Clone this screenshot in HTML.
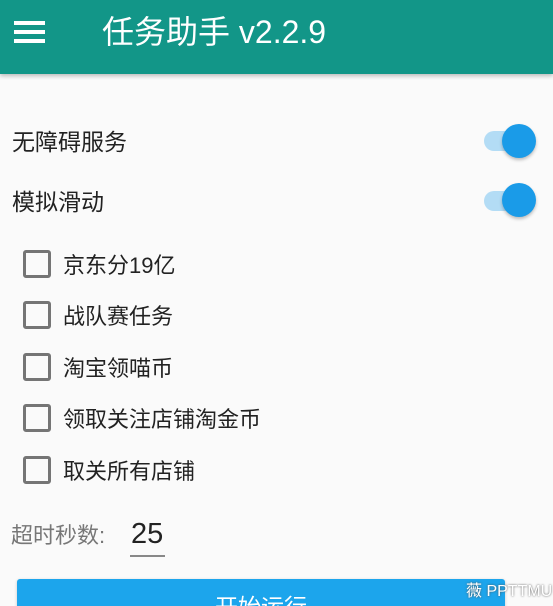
<!DOCTYPE html>
<html><head><meta charset="utf-8"><style>
html,body{margin:0;width:553px;height:606px;overflow:hidden}
body{background:#fafafa;font-family:"Liberation Sans","Noto Sans CJK SC",sans-serif;position:relative}
.hdr{position:absolute;left:0;top:0;width:553px;height:74px;background:#129688;box-shadow:0 2px 4px rgba(0,0,0,.25)}
.hb{position:absolute;left:14px;width:31px;height:4px;background:#fff}
.t{position:absolute;left:102px;top:13px;font-size:32px;color:#fff;line-height:38px;white-space:nowrap}
.lbl{position:absolute;left:12px;font-size:23px;color:#222;line-height:30px}
.trk{position:absolute;left:484px;width:30px;height:20px;border-radius:10px;background:#b3dcf5}
.th{position:absolute;left:502px;width:34px;height:34px;border-radius:50%;background:#1a9be8;box-shadow:0 2px 3px rgba(0,0,0,.25)}
.cb{position:absolute;left:23px;width:22px;height:22px;border:3px solid #757575;border-radius:3px}
.ct{position:absolute;left:63px;font-size:22px;color:#222;line-height:28px;white-space:nowrap}
</style></head><body>
<div class="hdr">
<div class="hb" style="top:21px"></div><div class="hb" style="top:30px"></div><div class="hb" style="top:39px"></div>
<div class="t">任务助手 v2.2.9</div>
</div>
<div class="lbl" style="top:127px">无障碍服务</div>
<div class="trk" style="top:131px"></div><div class="th" style="top:124px"></div>
<div class="lbl" style="top:187px">模拟滑动</div>
<div class="trk" style="top:191px"></div><div class="th" style="top:183px"></div>
<div class="cb" style="top:250px"></div><div class="ct" style="top:252px">京东分19亿</div>
<div class="cb" style="top:301px"></div><div class="ct" style="top:303px">战队赛任务</div>
<div class="cb" style="top:353px"></div><div class="ct" style="top:355px">淘宝领喵币</div>
<div class="cb" style="top:404px"></div><div class="ct" style="top:406px">领取关注店铺淘金币</div>
<div class="cb" style="top:456px"></div><div class="ct" style="top:458px">取关所有店铺</div>
<div style="position:absolute;left:11px;top:522px;font-size:22px;color:#777;line-height:28px;white-space:nowrap">超时秒数:</div>
<div style="position:absolute;left:131px;top:517px;font-size:29px;color:#222;line-height:34px">25</div>
<div style="position:absolute;left:130px;top:555px;width:35px;height:2px;background:#888"></div>
<div style="position:absolute;left:17px;top:579px;width:488px;height:40px;background:#1ca5ec;border-radius:3px;box-shadow:0 1px 3px rgba(0,0,0,.2);color:#fff;text-align:center;font-size:23px;line-height:56px">开始运行</div>
<div style="position:absolute;left:466px;top:577px;font-size:16px;color:#fff;white-space:nowrap;text-shadow:0 0 2px #555">薇 PPTTMU</div>
</body></html>
